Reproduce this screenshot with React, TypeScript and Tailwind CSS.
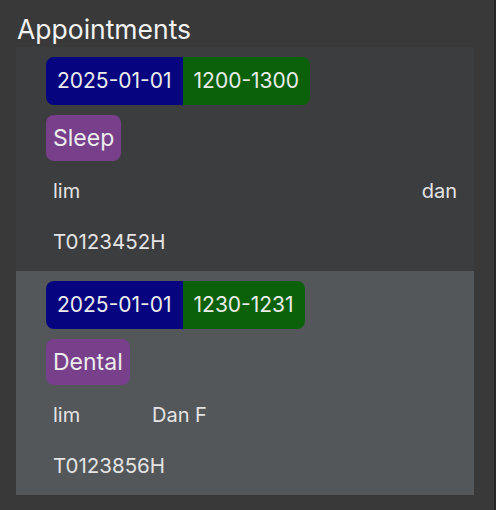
type Appt = {
  date: string
  time: string
  tag: string
  patient: string
  doctor: string
  nric: string
  bg: string
  spread: boolean
}

const appts: Appt[] = [
  { date: "2025-01-01", time: "1200-1300", tag: "Sleep", patient: "lim", doctor: "dan", nric: "T0123452H", bg: "bg-[#3c3d3f]", spread: true },
  { date: "2025-01-01", time: "1230-1231", tag: "Dental", patient: "lim", doctor: "Dan F", nric: "T0123856H", bg: "bg-[#53575a]", spread: false },
]

function Card({ a }: { a: Appt }) {
  return (
    <div className={`${a.bg} pl-[30px] pr-[17px] pt-[10px] pb-[4px]`}>
      {/* date + time pill */}
      <div className="flex">
        <div className="flex h-[48px] overflow-hidden rounded-[8px] text-[21px] text-[#ececec]">
          <span className="flex items-center bg-[#06057f] px-[11px]">{a.date}</span>
          <span className="flex items-center bg-[#0a610a] px-[11px]">{a.time}</span>
        </div>
      </div>
      <div className="mt-[10px] flex">
        <span className="flex h-[46px] items-center rounded-[8px] bg-[#783f8a] px-[7px] text-[23px] text-[#ececec]">{a.tag}</span>
      </div>
      <div className={`mt-[4px] flex h-[52px] items-center pl-[7px] text-[20px] text-[#e4e4e4] ${a.spread ? "justify-between" : ""}`}>
        <span className={a.spread ? "" : "w-[99px]"}>{a.patient}</span>
        <span>{a.doctor}</span>
      </div>
      <div className="flex h-[50px] items-center pl-[7px] text-[20.5px] text-[#e4e4e4]">{a.nric}</div>
    </div>
  )
}

export default function App() {
  return (
    <div className="h-[510px] w-[496px] border-r-2 border-[#262626] bg-[#393939] font-['Inter',sans-serif]">
      <h1 className="pl-[17px] pt-[12px] text-[26.5px] leading-[35px] text-[#f2f2f2]">Appointments</h1>
      <div className="ml-[16px] w-[458px]">
        {appts.map((a) => (
          <Card key={a.nric} a={a} />
        ))}
      </div>
    </div>
  )
}
